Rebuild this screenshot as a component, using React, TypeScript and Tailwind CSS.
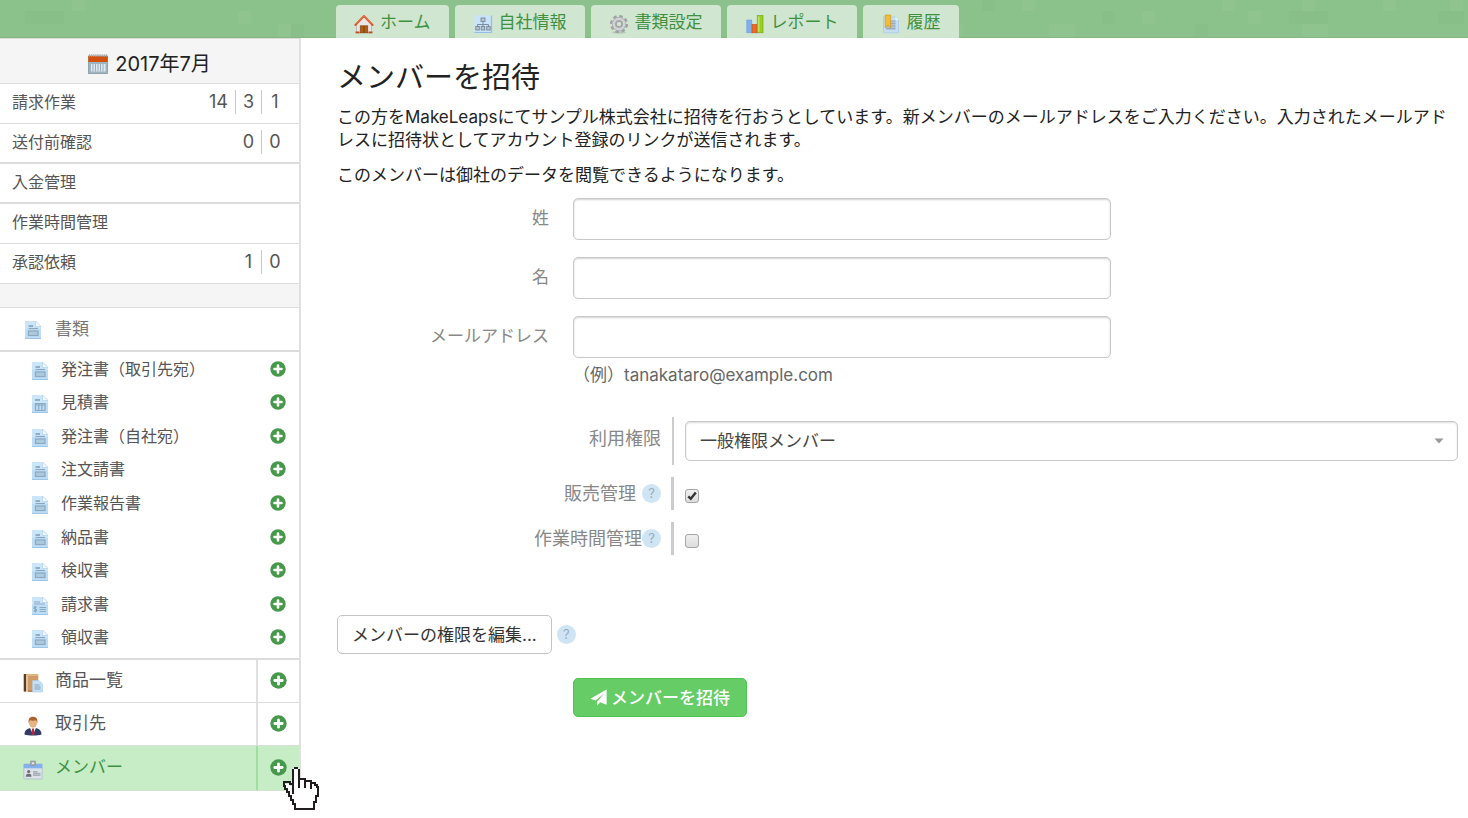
import React, { useState } from "react";

type IconProps = { className?: string };

function CalendarIcon({ className }: IconProps) {
  return (
    <svg viewBox="0 0 20 20" className={className} aria-hidden="true">
      <rect x="0.5" y="2" width="19" height="17.5" fill="#9fb4bf" stroke="#8697a0" strokeWidth="0.8" />
      <rect x="0.3" y="2" width="19.4" height="6" fill="#d3510f" />
      <path d="M1 1.5h18" stroke="#a8a8a8" strokeWidth="2.4" strokeDasharray="1.2 0.9" />
      <rect x="3" y="10" width="14.5" height="7.5" fill="#dfeaf0" />
      <path d="M5 10v7.5M7.5 10v7.5M10 10v7.5M12.5 10v7.5M15 10v7.5" stroke="#8fa5b2" strokeWidth="0.9" />
    </svg>
  );
}

function HomeIcon({ className }: IconProps) {
  return (
    <svg viewBox="0 0 20 20" className={className} aria-hidden="true">
      <path d="M2.6 9.5 10 2.5l7.4 7v9.3H2.6z" fill="#e9e7e5" stroke="#b0a9a3" strokeWidth="0.7" />
      <rect x="6.2" y="11.8" width="7.6" height="7" fill="#b05f1b" stroke="#7c3c08" strokeWidth="0.6" />
      <path d="M10 12v6.8" stroke="#6e3205" strokeWidth="0.8" />
      <path d="M1.5 17.5h4v1.7h-4zM14.5 17.5h4v1.7h-4z" fill="#c2481a" />
      <path d="M1.4 11 10 2l8.6 9" fill="none" stroke="#d8592b" strokeWidth="2" strokeLinecap="round" strokeLinejoin="round" />
      <path d="M2.2 9.6 10 1.5l7.8 8.1" fill="none" stroke="#f0906a" strokeWidth="0.6" />
    </svg>
  );
}

function OrgIcon({ className }: IconProps) {
  return (
    <svg viewBox="0 0 20 20" className={className} aria-hidden="true">
      <rect x="1.5" y="1.5" width="17" height="17" fill="#c9e3f8" />
      <path d="M1.5 18.500h17v-17" fill="none" stroke="#93bde6" strokeWidth="1.2" />
      <path d="M10 7v6M4.500 13v-2.500h11V13" fill="none" stroke="#7d8d9d" strokeWidth="1" />
      <g fill="#b8c4d0" stroke="#76879a" strokeWidth="0.9">
        <rect x="8" y="4" width="4" height="3.5" />
        <rect x="2.8" y="12.5" width="3.5" height="3.5" />
        <rect x="8.2" y="12.5" width="3.5" height="3.5" />
        <rect x="13.7" y="12.5" width="3.5" height="3.5" />
      </g>
    </svg>
  );
}

function GearIcon({ className }: IconProps) {
  return (
    <svg viewBox="0 0 20 20" className={className} aria-hidden="true">
      <ellipse cx="10" cy="18.4" rx="7" ry="1.2" fill="#9fb6a0" opacity="0.6" />
      <circle cx="10" cy="10" r="7.6" fill="none" stroke="#9ea2a4" strokeWidth="3" strokeDasharray="3.4 2.57" />
      <circle cx="10" cy="10" r="5" fill="none" stroke="#adb0b2" strokeWidth="4.4" />
      <circle cx="10" cy="10" r="5.2" fill="none" stroke="#d2d4d5" strokeWidth="2.2" />
      <circle cx="10" cy="10" r="2.8" fill="#d3e4d3" stroke="#8b8f91" strokeWidth="0.8" />
    </svg>
  );
}

function ChartIcon({ className }: IconProps) {
  return (
    <svg viewBox="0 0 20 20" className={className} aria-hidden="true">
      <rect x="1.8" y="6" width="5" height="12.8" fill="#7db0ef" stroke="#6c9de0" strokeWidth="0.6" />
      <rect x="7" y="10.5" width="5" height="8.3" fill="#ea6a26" stroke="#c84c10" strokeWidth="0.6" />
      <rect x="12.2" y="1.5" width="5.8" height="17.3" fill="#96cf22" stroke="#6fa312" strokeWidth="0.6" />
      <path d="M13.7 2.5v15.3" stroke="#bfe662" strokeWidth="1.5" />
    </svg>
  );
}

function HistoryIcon({ className }: IconProps) {
  return (
    <svg viewBox="0 0 20 20" className={className} aria-hidden="true">
      <path d="M2.5 3h12l3 3v12.800h-15z" fill="#c6def4" stroke="#a5c9eb" strokeWidth="0.7" />
      <path d="M14.5 3v3h3" fill="#eef6fd" />
      <path d="M5 6.500h9.500v9.500H5z" fill="#b3c4d4" />
      <path d="M5 7h9.500M5 9.500h9.500M5 12h9.500M5 14.500h9.500" stroke="#97aabd" strokeWidth="1.200" />
      <path d="M4.200 1h5.400v13l-2.700-2.800L4.200 14z" fill="#f2bd35" stroke="#d19a1b" strokeWidth="0.7" />
    </svg>
  );
}

function DocumentIcon({ className, kind = "plain" }: IconProps & { kind?: "plain" | "table" | "bill" }) {
  return (
    <svg viewBox="0 0 18 20" className={className} aria-hidden="true">
      <path d="M1 1h10.500L17 6.500V19H1z" fill="#bddcf5" />
      <path d="M1 1h10.500L17 6.500V9H1z" fill="#cbe5f9" />
      <path d="M1 18.500h16" stroke="#9cc5e8" strokeWidth="1" />
      <path d="M11.500 1v5.500H17z" fill="#f3faff" stroke="#a9cdea" strokeWidth="0.6" />
      <g stroke="#8aa8c0" fill="none" strokeWidth="1.2">
        {kind === "plain" && (
          <>
            <path d="M4.500 6h4.500" strokeWidth="1.800" />
            <path d="M4.500 8.500h9.500" />
            <rect x="4.500" y="11" width="9.500" height="4.500" fill="#adc9de" />
          </>
        )}
        {kind === "table" && (
          <>
            <path d="M4 6h5" strokeWidth="1.800" />
            <path d="M4.500 9.500h9.500v7H4.500zM4.500 11h9.500M7.700 9.500v7M10.900 9.500v7" />
          </>
        )}
        {kind === "bill" && (
          <>
            <path d="M3 6h6M3 8h11" />
            <path d="M5.600 11.300c-.8-.8-2.600-.5-2.600.6 0 1.300 2.700.9 2.700 2.300 0 1.200-2 1.500-2.900.5M4.300 10v6.500" />
            <path d="M8.500 11.500H15M8.500 13.500H15M8.500 15.500H15" />
          </>
        )}
      </g>
    </svg>
  );
}

function CatalogIcon({ className }: IconProps) {
  return (
    <svg viewBox="0 0 20 20" className={className} aria-hidden="true">
      <rect x="0.8" y="1" width="14.5" height="17.5" rx="0.8" fill="#d09c66" />
      <path d="M5 2h10" stroke="#e7bd8c" strokeWidth="1.500" />
      <path d="M.8 1h2.200v17.500H.8z" fill="#5d3a22" />
      <path d="M4 1.500v16.500" stroke="#f1e4d4" strokeWidth="1.100" />
      <path d="M5 18.200h9" stroke="#9a6535" strokeWidth="1" />
      <path d="M9.500 7.500h6.500l3.500 3.500v8h-10z" fill="#c5e0f6" stroke="#a9cbe6" strokeWidth="0.600" />
      <path d="M11.500 12h5M11.500 14h6M11.500 16h6" stroke="#86a4bc" strokeWidth="1" />
    </svg>
  );
}

function ClientIcon({ className }: IconProps) {
  return (
    <svg viewBox="0 0 20 20" className={className} aria-hidden="true">
      <path d="M1.500 18.500c0-4 2.500-5.800 6-6.500h5c3.500.7 6 2.500 6 6.500-4 1.300-13 1.300-17 0z" fill="#303d69" />
      <path d="m7 12 3 6.500L13 12l-3-1z" fill="#f3f3f6" />
      <path d="m9.200 12.500h1.600l.7 5.500-1.500 1.300L8.500 18z" fill="#bf2431" />
      <ellipse cx="10" cy="6.800" rx="4" ry="5" fill="#e8b384" />
      <path d="M5.700 7.500C5 3 6.500.8 10 .8S15 3 14.300 7.500c-.4-1.600-.7-2.600-1.300-3.200-2 .5-4 .5-6 0-.6.600-.9 1.600-1.300 3.200z" fill="#a7642c" />
    </svg>
  );
}

function MemberIcon({ className }: IconProps) {
  return (
    <svg viewBox="0 0 20 20" className={className} aria-hidden="true">
      <rect x="0.800" y="4" width="18.400" height="15" rx="0.800" fill="#dde2e8" stroke="#a8b7c6" strokeWidth="0.700" />
      <path d="M.8 4h18.400v4.300H.8z" fill="#82b1f0" />
      <path d="M7.500 1h5v4.500h-5z" fill="#a9adb2" stroke="#8d9196" strokeWidth="0.600" />
      <rect x="9" y="2.500" width="2" height="1.500" fill="#e9edf0" />
      <circle cx="5.700" cy="11.500" r="1.600" fill="#6b6f76" />
      <path d="M2.800 16.800c0-2.600 1.500-3 2.900-3s2.900.4 2.900 3z" fill="#6b6f76" />
      <path d="M10 11.800h4.500M10 13.500h7.500M10 15.200h7.500" stroke="#aab1ba" strokeWidth="1.500" />
    </svg>
  );
}

function PlusIcon({ className }: IconProps) {
  return (
    <svg viewBox="0 0 16 16" className={className} aria-hidden="true">
      <circle cx="8" cy="8" r="7.700" fill="#46984a" />
      <path d="M8 4.500v7M4.500 8h7" stroke="#fff" strokeWidth="2.600" strokeLinecap="round" />
    </svg>
  );
}

function PlaneIcon({ className }: IconProps) {
  return (
    <svg viewBox="0 0 18 18" className={className} aria-hidden="true">
      <path d="M17.600.4v16.200l-7-2.600-3 3.600v-4.400L15.200 4.400 5.900 12.300.4 10.200z" fill="#fff" />
    </svg>
  );
}

function HandPointer({ className }: IconProps) {
  return (
    <svg viewBox="0 0 36 44" className={className} aria-hidden="true">
      <path
        d="M10 1h6v10h6v2h6v3h5v3h2v10h-2v6h-2v7H12v-5h-2v-4H8v-4H6v-4H4v-4H1v-4h6v2h3z"
        fill="#fff"
      />
      <path
        d="M11 1h4M10 2v25M16 2v19M17 12h5v9M23 14h5v8M29 16h3v2h2v2h1v9h-2v6h-2v7H12v-5h-2v-4H8v-4H6v-4H4v-3H2v-3H1v-4h6v2h3"
        fill="none"
        stroke="#211d1e"
        strokeWidth="2"
        shapeRendering="crispEdges"
      />
    </svg>
  );
}

function HelpBadge({ label }: { label: string }) {
  return (
    <button
      type="button"
      aria-label={label}
      className="flex size-[19px] shrink-0 items-center justify-center rounded-full bg-[#cfe5f6] text-[13px] leading-none text-[#9aacb9]"
    >
      ?
    </button>
  );
}

const tabs = [
  { label: "ホーム", Icon: HomeIcon },
  { label: "自社情報", Icon: OrgIcon },
  { label: "書類設定", Icon: GearIcon },
  { label: "レポート", Icon: ChartIcon },
  { label: "履歴", Icon: HistoryIcon },
];

const tasks = [
  { label: "請求作業", counts: [14, 3, 1], border: "border-b" },
  { label: "送付前確認", counts: [0, 0], border: "border-b-2" },
  { label: "入金管理", counts: [], border: "border-b-2" },
  { label: "作業時間管理", counts: [], border: "border-b" },
  { label: "承認依頼", counts: [1, 0], border: "border-b" },
];

const documents: { label: string; kind?: "plain" | "table" | "bill" }[] = [
  { label: "発注書（取引先宛）" },
  { label: "見積書", kind: "table" },
  { label: "発注書（自社宛）" },
  { label: "注文請書" },
  { label: "作業報告書" },
  { label: "納品書" },
  { label: "検収書" },
  { label: "請求書", kind: "bill" },
  { label: "領収書" },
];

const sections = [
  { label: "商品一覧", Icon: CatalogIcon, active: false },
  { label: "取引先", Icon: ClientIcon, active: false },
  { label: "メンバー", Icon: MemberIcon, active: true },
];

const lightTiles = [
  [72, -2], [238, 11], [278, 24], [1022, -2], [1142, 11], [1222, -2], [1248, 11], [1302, -2], [1383, -2], [1450, -2],
  [1049, 24], [1062, 24], [1302, 24], [1315, 24], [950, 24],
];
const darkTiles = [
  [291, 24], [1195, 24], [1289, 11], [1302, 11], [1315, 11], [1102, 11], [1438, 11], [1451, 11], [982, -2], [25, 11], [38, 11], [51, 11],
];

function HeaderTexture() {
  return (
    <svg className="absolute inset-0 size-full" aria-hidden="true">
      {lightTiles.map(([x, y]) => (
        <rect key={`l${x}-${y}`} x={x} y={y} width="13" height="13" fill="#fff" opacity="0.035" />
      ))}
      {darkTiles.map(([x, y]) => (
        <rect key={`d${x}-${y}`} x={x} y={y} width="13" height="13" fill="#2f7d3a" opacity="0.035" />
      ))}
    </svg>
  );
}

function Header() {
  return (
    <header className="relative h-[38px] border-b border-[#83b784] bg-[#8bc28b] pl-[336px]">
      <HeaderTexture />
      <nav className="relative flex gap-1.5 pt-[5px]">
        {tabs.map(({ label, Icon }) => (
          <a
            key={label}
            href="#"
            className="flex h-[33px] items-center gap-1.5 rounded-t bg-[#d1e6d1] px-[18px] text-[17px] leading-6 text-[#3f9142]"
          >
            <Icon className="mt-1 size-5" />
            {label}
          </a>
        ))}
      </nav>
    </header>
  );
}

function Sidebar() {
  return (
    <aside className="relative w-[301px] shrink-0 self-start border-r-2 border-[#e0e0e0] text-[#555]">
      <div className="flex h-[46px] items-center justify-center gap-[7px] border-y border-[#dcdcdc] bg-[#f5f5f5] pt-1.5 text-xl text-[#222]">
        <CalendarIcon className="size-5" />
        2017年7月
      </div>
      <ul className="text-base">
        {tasks.map(({ label, counts, border }) => (
          <li key={label} className={`flex h-10 items-center justify-between border-[#dcdcdc] pb-[3px] pl-3 pr-[11px] ${border}`}>
            <a href="#">{label}</a>
            <span className="flex divide-x-1 divide-[#c8c8c8] text-lg">
              {counts.map((count, i) => (
                <a key={i} href="#" className="min-w-[26px] px-[7px] text-center leading-6">
                  {count}
                </a>
              ))}
            </span>
          </li>
        ))}
      </ul>
      <div className="h-6 border-b border-[#dcdcdc] bg-[#f5f5f5]" />
      <a href="#" className="flex h-11 items-center gap-[13px] border-b-2 border-[#dcdcdc] pl-6 pt-0.5 text-[17px] text-[#777]">
        <DocumentIcon className="h-5 w-[18px]" />
        書類
      </a>
      <ul className="grid h-[308px] grid-rows-9 border-b-2 border-[#dcdcdc] pb-1 text-base">
        {documents.map(({ label, kind }) => (
          <li key={label} className="flex items-center pl-[31px] pr-[13px]">
            <a href="#" className="flex flex-1 items-center gap-3">
              <DocumentIcon kind={kind} className="mt-1 h-5 w-[18px]" />
              {label}
            </a>
            <button type="button" aria-label={`${label}を追加`}>
              <PlusIcon className="size-4" />
            </button>
          </li>
        ))}
      </ul>
      <ul className="text-[17px]">
        {sections.map(({ label, Icon, active }) => (
          <li
            key={label}
            className={`flex border-b ${active ? "h-[45px] border-[#cfe3cf] bg-[#c6edc6] text-[#3f9142]" : "h-[43px] border-[#dcdcdc]"}`}
          >
            <a href="#" className="flex flex-1 items-center gap-3 pl-[23px]">
              <Icon className="mt-1 size-5" />
              {label}
            </a>
            <button
              type="button"
              aria-label={`${label}を追加`}
              className={`flex w-[43px] items-center justify-center border-l-2 pb-0.5 ${active ? "border-[#9fdda0]" : "border-[#e0e0e0]"}`}
            >
              <PlusIcon className="size-[17px]" />
            </button>
          </li>
        ))}
      </ul>
      <HandPointer className="absolute -bottom-5 -right-5 z-10 h-11 w-9" />
    </aside>
  );
}

function TextField({ id, label, type = "text" }: { id: string; label: string; type?: string }) {
  return (
    <div className="flex">
      <label htmlFor={id} className="w-[212px] shrink-0 pt-2 text-right text-[17px] leading-6 text-[#888]">
        {label}
      </label>
      <input
        id={id}
        type={type}
        className="ml-6 h-[42px] w-[538px] min-w-0 rounded-[5px] border border-[#c8c8c8] px-3 text-[17px] shadow-[inset_0_1px_2px_rgba(0,0,0,0.18)]"
      />
    </div>
  );
}

function PermissionBox({ id, initial }: { id: string; initial: boolean }) {
  const [checked, setChecked] = useState(initial);
  return (
    <span className="relative flex size-[14px]">
      <input
        id={id}
        type="checkbox"
        checked={checked}
        onChange={() => setChecked(!checked)}
        className="size-[14px] appearance-none rounded-[3px] border border-[#a5a5a5] bg-linear-to-b from-[#f0f0f0] to-[#dcdcdc]"
      />
      {checked && (
        <svg viewBox="0 0 14 14" className="pointer-events-none absolute inset-0 size-[14px]" aria-hidden="true">
          <path d="M3.300 7.300 5.800 9.800 10.800 3.600" fill="none" stroke="#333" strokeWidth="2.400" />
        </svg>
      )}
    </span>
  );
}

export default function App() {
  return (
    <div className="min-h-screen bg-white font-['Inter','Noto_Sans_CJK_JP',sans-serif] text-[#222]">
      <Header />
      <div className="flex">
        <Sidebar />
        <main className="min-w-0 flex-1 pl-9 pr-2.5 pt-5">
          <h1 className="text-[29px] leading-10">メンバーを招待</h1>
          <p className="mt-2 text-[17px] leading-[23px]">
            この方をMakeLeapsにてサンプル株式会社に招待を行おうとしています。新メンバーのメールアドレスをご入力ください。入力されたメールアドレスに招待状としてアカウント登録のリンクが送信されます。
          </p>
          <p className="mt-3 text-[17px] leading-[23px]">このメンバーは御社のデータを閲覧できるようになります。</p>

          <form onSubmit={(e) => e.preventDefault()}>
            <div className="mt-[11px] flex flex-col gap-[17px]">
              <TextField id="last-name" label="姓" />
              <TextField id="first-name" label="名" />
              <TextField id="email" label="メールアドレス" type="email" />
            </div>
            <p className="ml-[236px] mt-[5px] text-[17px] leading-6 text-[#666]">（例）tanakataro@example.com</p>

            <div className="mt-[30px] flex">
              <label htmlFor="role" className="w-[324px] shrink-0 pt-2.5 text-right text-lg leading-6 text-[#888]">
                利用権限
              </label>
              <div className="ml-[11px] flex flex-1 border-l-2 border-[#cccccc] pb-1 pl-[11px] pt-1">
                <div className="relative flex-1">
                  <select
                    id="role"
                    className="h-10 w-full appearance-none rounded-[5px] border border-[#c8c8c8] bg-white px-[14px] text-[17px] leading-6 text-[#444] shadow-[inset_0_1px_2px_rgba(0,0,0,0.14)]"
                  >
                    <option>一般権限メンバー</option>
                  </select>
                  <svg viewBox="0 0 10 6" className="pointer-events-none absolute right-[14px] top-[17px] h-[6px] w-[10px]" aria-hidden="true">
                    <path d="M.5.500h9L5 5.500z" fill="#999" />
                  </svg>
                </div>
              </div>
            </div>

            <div className="mt-3 flex h-[33px]">
              <div className="flex w-[324px] shrink-0 items-center justify-end gap-1.5 text-lg leading-6 text-[#888]">
                <label htmlFor="sales">販売管理</label>
                <HelpBadge label="販売管理のヘルプ" />
              </div>
              <div className="ml-2.5 flex items-center border-l-[3px] border-[#cccccc] pl-[11px] pt-1">
                <PermissionBox id="sales" initial={true} />
              </div>
            </div>
            <div className="mt-3 flex h-[33px]">
              <div className="flex w-[324px] shrink-0 items-center justify-end text-lg leading-6 text-[#888]">
                <label htmlFor="timesheet">作業時間管理</label>
                <HelpBadge label="作業時間管理のヘルプ" />
              </div>
              <div className="ml-2.5 flex items-center border-l-[3px] border-[#cccccc] pl-[11px] pt-1">
                <PermissionBox id="timesheet" initial={false} />
              </div>
            </div>

            <div className="mt-[60px] flex items-center gap-[5px]">
              <button type="button" className="h-[39px] rounded-[5px] border border-[#c4c4c4] bg-white px-[14px] text-[17px] leading-6 text-[#333]">
                メンバーの権限を編集...
              </button>
              <HelpBadge label="メンバーの権限のヘルプ" />
            </div>
            <button
              type="submit"
              className="ml-[236px] mt-6 flex h-[39px] items-center gap-1 rounded-[5px] border border-[#4fc452] bg-[#66cc66] px-4 text-[17px] font-medium leading-6 text-white"
            >
              <PlaneIcon className="size-[17px]" />
              メンバーを招待
            </button>
          </form>
        </main>
      </div>
    </div>
  );
}
